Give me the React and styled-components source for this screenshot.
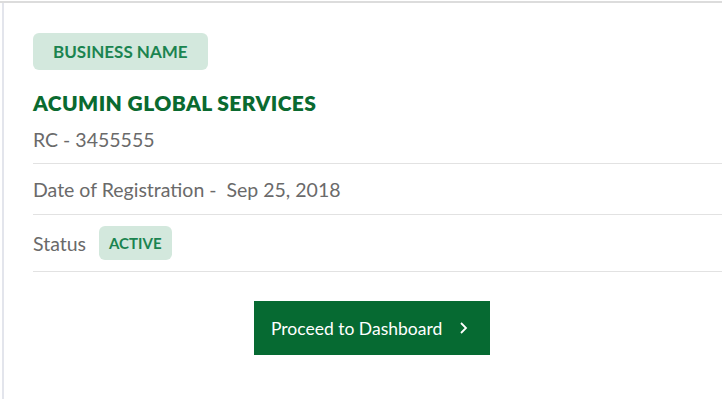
import React from "react";
import styled, { createGlobalStyle } from "styled-components";

const GlobalStyle = createGlobalStyle`
  html, body {
    margin: 0;
    padding: 0;
    background: #ffffff;
    overflow: hidden;
  }
  body {
    font-family: Lato, "Liberation Sans", sans-serif;
  }
`;

const Page = styled.div`
  width: 722px;
  height: 399px;
  border-top: 2px solid #dcdcdc;
  margin-top: 1px;
  box-sizing: border-box;
`;

const Card = styled.section`
  margin-left: 2px;
  height: 100%;
  border-left: 2px solid #e3e5ec;
  padding: 30px 0 0 29px;
  box-sizing: border-box;
`;

const Pill = styled.span`
  display: inline-flex;
  align-items: center;
  justify-content: center;
  background: #d3e8dd;
  color: #1b8450;
  font-weight: 700;
  border-radius: 6px;
  height: ${(p) => (p.small ? "34px" : "37px")};
  padding: ${(p) => (p.small ? "0 10px" : "0 20px")};
  font-size: ${(p) => (p.small ? "15px" : "17px")};
`;

const Title = styled.h1`
  margin: 21px 0 0;
  font-size: 21px;
  font-weight: 800;
  color: #0a6a30;
  letter-spacing: 0.4px;
  line-height: 24px;
`;

const Row = styled.div`
  display: flex;
  align-items: center;
  gap: 13px;
  color: #6a6a6a;
  font-size: 19.5px;
  height: ${(p) => p.h}px;
  border-bottom: ${(p) => (p.line ? "1px solid #e2e2e2" : "none")};
`;

const Actions = styled.div`
  display: flex;
  justify-content: center;
  padding-right: 11px;
  margin-top: 29px;
`;

const Button = styled.button`
  display: flex;
  align-items: center;
  gap: 17px;
  width: 236px;
  height: 54px;
  padding: 0 0 0 17px;
  justify-content: flex-start;
  background: #066a32;
  color: #ffffff;
  border: none;
  font-family: Lato, "Liberation Sans", sans-serif;
  font-size: 17.5px;
  cursor: pointer;
`;

export default function App() {
  return (
    <Page>
      <GlobalStyle />
      <Card>
        <Pill>BUSINESS NAME</Pill>
        <Title>ACUMIN GLOBAL SERVICES</Title>
        <Row h={48} line>
          RC - 3455555
        </Row>
        <Row h={50} line>
          Date of Registration -&nbsp; Sep 25, 2018
        </Row>
        <Row h={56} line>
          Status
          <Pill small>ACTIVE</Pill>
        </Row>
        <Actions>
          <Button>
            Proceed to Dashboard
            <svg width="10" height="12" viewBox="0 0 10 12">
              <path d="M2 1l5 5-5 5" fill="none" stroke="#fff" strokeWidth="1.8" />
            </svg>
          </Button>
        </Actions>
      </Card>
    </Page>
  );
}
